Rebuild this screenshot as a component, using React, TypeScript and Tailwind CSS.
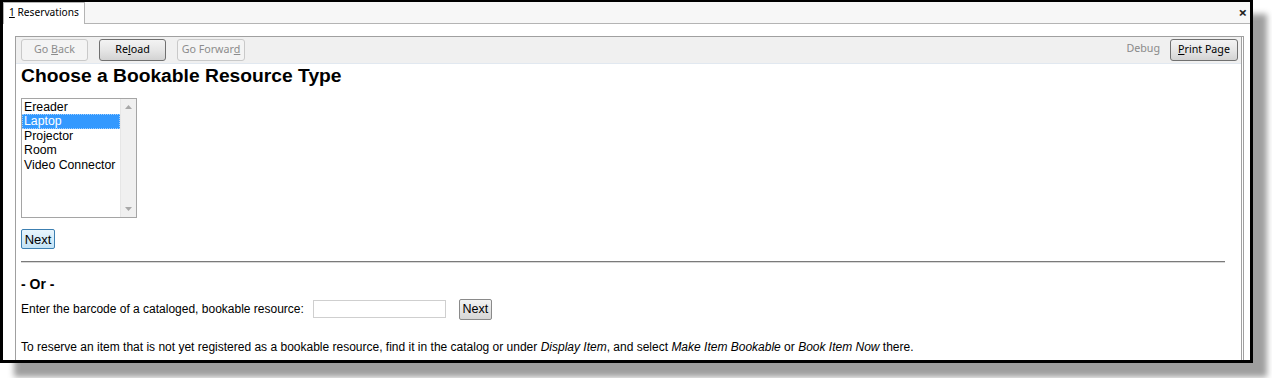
import React from "react";

const uiFont = { fontFamily: '"Segoe UI", "Noto Sans", sans-serif' };
const pageFont = { fontFamily: '"Liberation Sans", Arial, sans-serif' };

function ToolBtn({
  children,
  disabled,
  w = "w-[67px]",
}: {
  children: React.ReactNode;
  disabled?: boolean;
  w?: string;
}) {
  return (
    <div
      className={
        "h-[22px] shrink-0 rounded-[3px] border flex items-center justify-center text-[10.7px] leading-none " +
        w +
        " " +
        (disabled
          ? "border-[#c9c9c9] bg-[#f4f4f4] text-[#8c8c8c]"
          : "border-[#707070] bg-gradient-to-b from-[#f3f3f3] via-[#e6e6e6] to-[#d3d3d3] text-black")
      }
    >
      <span className="-mt-[1px]">{children}</span>
    </div>
  );
}

const items = ["Ereader", "Laptop", "Projector", "Room", "Video Connector"];

export default function App() {
  return (
    <div className="w-[1272px] h-[378px] bg-white overflow-hidden">
      <div className="w-[1253px] h-[363px] border-[3px] border-t-2 border-black bg-white shadow-[14px_14px_6px_rgba(0,0,0,0.38)] flex flex-col overflow-hidden">
        {/* tab strip */}
        <div
          className="h-[22px] shrink-0 flex items-end bg-[#f7f7f7] border-b border-[#b4b4b4] text-[10.2px] text-black"
          style={uiFont}
        >
          <div className="h-[22px] -mb-px bg-white border-l border-t border-r border-[#b4b4b4] px-[5px] flex items-center">
            <span className="-mt-[1px]">
              <span className="underline">1</span> Reservations
            </span>
          </div>
          <div className="ml-auto self-center mr-[3px] -mt-[1px] text-[15px] font-bold leading-none text-[#222]">
            ×
          </div>
        </div>

        {/* content */}
        <div className="flex-1 min-h-0 bg-white pl-[12px] pt-[12px] pr-[6px] flex flex-col">
          <div className="flex-1 min-h-0 border-double border-l border-t border-r-[3px] border-[#a0a0a0] flex flex-col">
            {/* toolbar */}
            <div
              className="h-[27px] shrink-0 bg-[#f0f0f0] border-b border-[#e1e8f0] flex items-start pt-[2px] pl-[5px] pr-[3px]"
              style={uiFont}
            >
              <ToolBtn disabled>
                Go <span className="underline">B</span>ack
              </ToolBtn>
              <div className="w-[11px]" />
              <ToolBtn>
                Re<span className="underline">l</span>oad
              </ToolBtn>
              <div className="w-[11px]" />
              <ToolBtn disabled w="w-[68px]">
                Go Forwar<span className="underline">d</span>
              </ToolBtn>
              <span className="ml-auto mr-[10px] mt-[1px] text-[10.7px] text-[#8a8a8a]">
                Debug
              </span>
              <ToolBtn w="w-[68px]">
                <span className="underline">P</span>rint Page
              </ToolBtn>
            </div>

            {/* page */}
            <div className="pl-[5px] pr-[16px] text-black" style={pageFont}>
              <h1 className="mt-[1px] text-[19.25px] leading-[22px] font-bold">
                Choose a Bookable Resource Type
              </h1>

              <div className="mt-[11px] w-[116px] h-[120px] border border-[#a5a5a5] flex">
                <div className="flex-1 pt-[0.5px] text-[12.3px] leading-[14.6px]">
                  {items.map((it) => (
                    <div
                      key={it}
                      className={
                        "pl-[2px] whitespace-nowrap " +
                        (it === "Laptop"
                          ? "bg-[#3399ff] text-white outline-1 outline-dotted outline-[#9fcfff] -outline-offset-1"
                          : "")
                      }
                    >
                      {it}
                    </div>
                  ))}
                </div>
                <div className="w-[16px] bg-[#f0f0f0] border-l border-[#e6e6e6] flex flex-col items-center justify-between py-[6px]">
                  <svg width="7" height="4" viewBox="0 0 7 4">
                    <path d="M0 4 L3.5 0 L7 4 Z" fill="#a8a8a8" />
                  </svg>
                  <svg width="7" height="4" viewBox="0 0 7 4">
                    <path d="M0 0 L3.5 4 L7 0 Z" fill="#a8a8a8" />
                  </svg>
                </div>
              </div>

              <div className="mt-[11px] w-[34px] h-[20px] rounded-[2px] border border-[#3c7fb1] bg-gradient-to-b from-[#e8f5fd] to-[#c3e3f6] flex items-center justify-center text-[13px] leading-none">
                Next
              </div>

              <div className="mt-[12px] border-t border-[#7a7a7a] border-b border-b-[#d8d8d8]" />

              <div className="mt-[13px] text-[14px] leading-[16px] font-bold">- Or -</div>

              <div className="mt-[7px] h-[20px] flex items-center text-[12px] leading-[14px]">
                <span>Enter the barcode of a cataloged, bookable resource:</span>
                <div className="ml-[9px] w-[133px] h-[18px] border border-[#cfcfcf] bg-white" />
                <div className="ml-[13px] w-[33px] h-[21px] rounded-[2px] border border-[#8a8a8a] bg-gradient-to-b from-[#f2f2f2] to-[#d6d6d6] flex items-center justify-center text-[12.5px] leading-none">
                  Next
                </div>
              </div>

              <div className="mt-[21px] text-[12px] leading-[14px] whitespace-nowrap">
                To reserve an item that is not yet registered as a bookable resource, find it in the
                catalog or under <i>Display Item</i>, and select <i>Make Item Bookable</i> or{" "}
                <i>Book Item Now</i> there.
              </div>
            </div>
          </div>
        </div>
      </div>
    </div>
  );
}
